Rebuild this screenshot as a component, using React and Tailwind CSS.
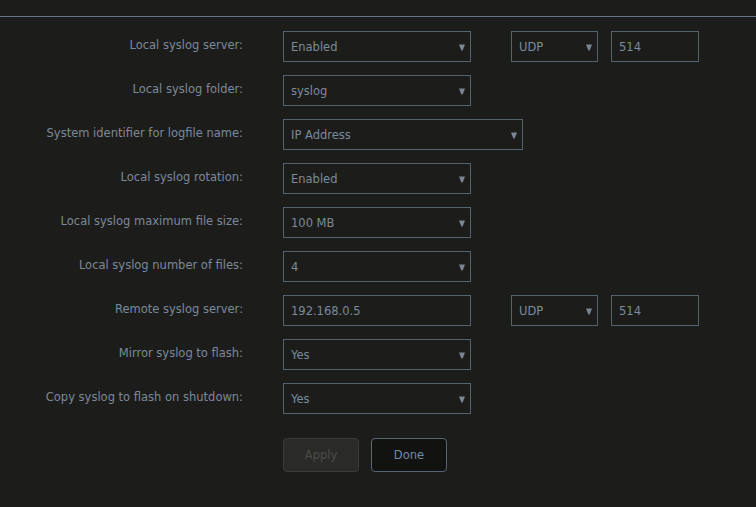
const Caret = () => (
  <svg width="6" height="7" viewBox="0 0 6 7" className="shrink-0 mt-[2px]">
    <path d="M0 0.5h6L3.7 6.5h-1.4z" fill="#7a8592" />
  </svg>
);

const Select = ({ value, width }) => (
  <div
    className={`${width} h-[31px] flex items-center justify-between pl-[7px] pr-[5px] border border-[#566170] text-[#7b8a9c]`}
  >
    <span className="pt-[3px]">{value}</span>
    <Caret />
  </div>
);

const Input = ({ value, width }) => (
  <div
    className={`${width} h-[31px] flex items-center pl-[7px] border border-[#566170] text-[#7b8a9c]`}
  >
    <span className="pt-[3px]">{value}</span>
  </div>
);

const Row = ({ label, children }) => (
  <div className="flex items-start h-[44px]">
    <div className="w-[244px] text-right pr-px pt-[6px] text-[#7c8899]">
      {label}
    </div>
    <div className="ml-[39px] flex">{children}</div>
  </div>
);

const App = () => {
  return (
    <div
      className="w-[756px] h-[507px] bg-[#1c1d1b] text-[11.5px] overflow-hidden"
      style={{ fontFamily: '"DejaVu Sans", sans-serif' }}
    >
      <div className="h-4" />
      <div className="h-px bg-[#66758a]" />
      <div className="pt-[14px]">
        <Row label="Local syslog server:">
          <Select value="Enabled" width="w-[188px]" />
          <div className="ml-[40px]">
            <Select value="UDP" width="w-[87px]" />
          </div>
          <div className="ml-[13px]">
            <Input value="514" width="w-[88px]" />
          </div>
        </Row>
        <Row label="Local syslog folder:">
          <Select value="syslog" width="w-[188px]" />
        </Row>
        <Row label="System identifier for logfile name:">
          <Select value="IP Address" width="w-[240px]" />
        </Row>
        <Row label="Local syslog rotation:">
          <Select value="Enabled" width="w-[188px]" />
        </Row>
        <Row label="Local syslog maximum file size:">
          <Select value="100 MB" width="w-[188px]" />
        </Row>
        <Row label="Local syslog number of files:">
          <Select value="4" width="w-[188px]" />
        </Row>
        <Row label="Remote syslog server:">
          <Input value="192.168.0.5" width="w-[188px]" />
          <div className="ml-[40px]">
            <Select value="UDP" width="w-[87px]" />
          </div>
          <div className="ml-[13px]">
            <Input value="514" width="w-[88px]" />
          </div>
        </Row>
        <Row label="Mirror syslog to flash:">
          <Select value="Yes" width="w-[188px]" />
        </Row>
        <Row label="Copy syslog to flash on shutdown:">
          <Select value="Yes" width="w-[188px]" />
        </Row>
        <div className="flex gap-3 ml-[283px] mt-[11px]">
          <button className="w-[76px] h-[34px] pt-px rounded-[4px] border border-[#3b3c39] bg-[#2a2b28] text-[#4b4d4a]">
            Apply
          </button>
          <button className="w-[76px] h-[34px] pt-px rounded-[4px] border border-[#5a6675] bg-[#121311] text-[#6f8aa8]">
            Done
          </button>
        </div>
      </div>
    </div>
  );
};

export default App;
